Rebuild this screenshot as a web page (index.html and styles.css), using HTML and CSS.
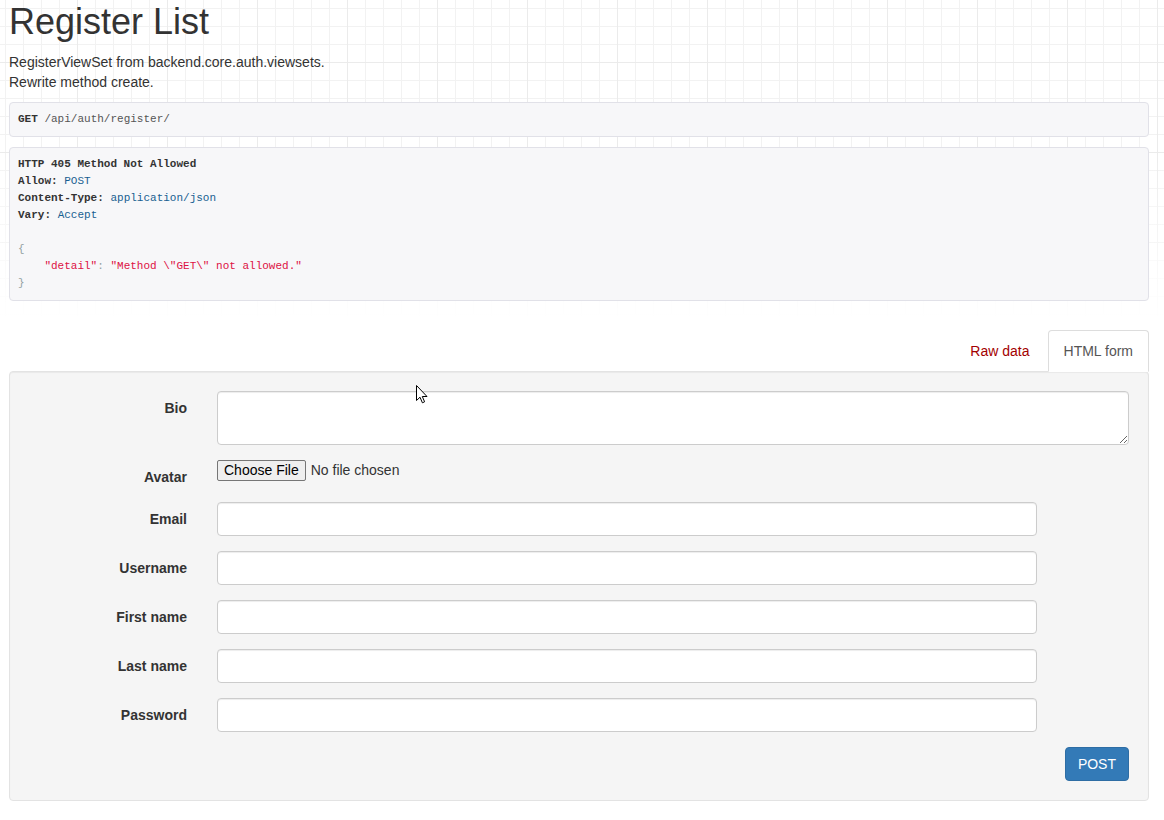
FILE: index.html
```html
<!DOCTYPE html>
<html lang="en">
<head>
<meta charset="utf-8">
<title>Register List</title>
<link rel="stylesheet" href="styles.css">
</head>
<body>
<div class="page">
  <h1 class="title">Register List</h1>
  <div class="description">
    <p>RegisterViewSet from backend.core.auth.viewsets.<br>Rewrite method create.</p>
  </div>

  <div class="request-info">
    <pre class="prettyprint"><b>GET</b> <span class="pln">/api/auth/register/</span></pre>
  </div>

  <div class="response-info">
    <pre class="prettyprint"><b>HTTP 405 Method Not Allowed</b>
<b>Allow:</b> <span class="lit">POST</span>
<b>Content-Type:</b> <span class="lit">application/json</span>
<b>Vary:</b> <span class="lit">Accept</span>

<span class="pun">{</span>
    <span class="str">"detail"</span><span class="pun">:</span> <span class="str">"Method \"GET\" not allowed."</span>
<span class="pun">}</span></pre>
  </div>

  <div class="tabbable">
    <ul class="nav-tabs">
      <li class="tab"><a class="tab-link" href="#raw">Raw data</a></li>
      <li class="tab active"><a class="tab-link" href="#form">HTML form</a></li>
    </ul>
    <div class="well">
      <form class="form-horizontal" action="#" method="post">
        <div class="form-group">
          <label class="control-label" for="bio">Bio</label>
          <div class="field"><textarea class="form-control textarea" id="bio" name="bio"></textarea></div>
        </div>
        <div class="form-group">
          <label class="control-label" for="avatar">Avatar</label>
          <div class="field"><input class="file-input" type="file" id="avatar" name="avatar"></div>
        </div>
        <div class="form-group">
          <label class="control-label" for="email">Email</label>
          <div class="field"><input class="form-control narrow" type="email" id="email" name="email"></div>
        </div>
        <div class="form-group">
          <label class="control-label" for="username">Username</label>
          <div class="field"><input class="form-control narrow" type="text" id="username" name="username"></div>
        </div>
        <div class="form-group">
          <label class="control-label" for="first_name">First name</label>
          <div class="field"><input class="form-control narrow" type="text" id="first_name" name="first_name"></div>
        </div>
        <div class="form-group">
          <label class="control-label" for="last_name">Last name</label>
          <div class="field"><input class="form-control narrow" type="text" id="last_name" name="last_name"></div>
        </div>
        <div class="form-group">
          <label class="control-label" for="password">Password</label>
          <div class="field"><input class="form-control narrow" type="password" id="password" name="password"></div>
        </div>
        <div class="form-actions">
          <button class="btn btn-primary" type="button">POST</button>
        </div>
      </form>
    </div>
  </div>

  <svg class="cursor" width="13" height="20" viewBox="0 0 13 20" aria-hidden="true">
    <path d="M0.5 0.5 L0.5 15.5 L4 12.2 L6.4 17.8 L8.6 16.8 L6.3 11.5 L11 11.5 Z" fill="#fff" stroke="#000" stroke-width="1" stroke-linejoin="miter"/>
  </svg>
</div>
</body>
</html>
```

FILE: styles.css
```css
html {
  background: #fff;
}

body {
  margin: 0;
  font-family: "Liberation Sans", Arial, Helvetica, sans-serif;
  font-size: 14px;
  line-height: 20px;
  color: #333;
  background-color: #fff;
  background-image:
    linear-gradient(to bottom, rgba(255,255,255,0) 0px, rgba(255,255,255,0) 150px, #fff 320px),
    repeating-linear-gradient(to right, #ebebeb 0 1px, transparent 1px 90px),
    repeating-linear-gradient(to bottom, #ebebeb 0 1px, transparent 1px 90px),
    repeating-linear-gradient(to right, #f2f2f2 0 1px, transparent 1px 18px),
    repeating-linear-gradient(to bottom, #f2f2f2 0 1px, transparent 1px 18px);
  background-size:
    100% 330px,
    100% 330px,
    100% 268px,
    100% 330px,
    100% 322px;
  background-position:
    0 0,
    77px 0,
    0 62px,
    5px 0,
    0 8px;
  background-repeat: no-repeat;
}

.page {
  position: relative;
  padding: 2px 15px 0 9px;
}

.title {
  margin: 0 0 10px;
  font-size: 36px;
  font-weight: 400;
  line-height: 1.1;
  color: #333;
}

.description p {
  margin: 0 0 10px;
}

.prettyprint {
  margin: 0 0 10px;
  padding: 8px;
  font-family: "Liberation Mono", "DejaVu Sans Mono", monospace;
  font-size: 11px;
  line-height: 17px;
  color: #333;
  background: #f7f7f9;
  border: 1px solid #e1e1e8;
  border-radius: 4px;
  white-space: pre;
  overflow: hidden;
}

.prettyprint b {
  font-weight: bold;
  color: #333;
}

.pln { color: #555; }
.lit { color: #195f91; }
.pun { color: #93a1a1; }
.str { color: #d14; }

.tabbable {
  margin-top: 29px;
}

.nav-tabs {
  display: flex;
  justify-content: flex-end;
  list-style: none;
  margin: 0;
  padding: 0;
}

.tab {
  margin: 0 0 -1px 2px;
}

.tab.active {
  position: relative;
  z-index: 1;
}

.tab-link {
  display: block;
  padding: 10px 15px;
  line-height: 20px;
  border: 1px solid transparent;
  border-radius: 4px 4px 0 0;
  color: #a30000;
  text-decoration: none;
}

.tab.active .tab-link {
  color: #555;
  background: #fff;
  border-color: #ddd #ddd transparent;
}

.well {
  padding: 19px;
  background: #f5f5f5;
  border: 1px solid #e3e3e3;
  border-radius: 4px;
  box-shadow: inset 0 1px 1px rgba(0,0,0,.05);
}

.form-horizontal {
  margin: 0;
}

.form-group {
  display: grid;
  grid-template-columns: 158px 1fr;
  column-gap: 30px;
  align-items: start;
  margin-bottom: 15px;
}

.control-label {
  padding-top: 7px;
  text-align: right;
  font-weight: bold;
  color: #333;
  white-space: nowrap;
}

.field {
  min-width: 0;
}

.form-control {
  display: block;
  box-sizing: border-box;
  width: 100%;
  height: 34px;
  margin: 0;
  padding: 6px 12px;
  font-family: inherit;
  font-size: 14px;
  line-height: 20px;
  color: #555;
  background: #fff;
  border: 1px solid #ccc;
  border-radius: 4px;
  box-shadow: inset 0 1px 1px rgba(0,0,0,.075);
}

.narrow {
  max-width: 820px;
}

.textarea {
  height: 54px;
  resize: vertical;
}

.file-input {
  display: block;
  margin: 0;
  padding: 0;
  font-family: inherit;
  font-size: 14px;
  line-height: 19px;
  color: #333;
}

.file-input::file-selector-button {
  font-family: inherit;
  font-size: 14px;
  line-height: 17px;
  height: 21px;
  margin: 0 5px 0 0;
  padding: 1px 6px;
  color: #000;
  background: #efefef;
  border: 1px solid #767676;
  border-radius: 2px;
}

.form-actions {
  display: flex;
  justify-content: flex-end;
}

.btn {
  display: inline-block;
  margin: 0;
  padding: 6px 12px;
  font-family: inherit;
  font-size: 14px;
  line-height: 20px;
  border: 1px solid transparent;
  border-radius: 4px;
  cursor: pointer;
}

.btn-primary {
  color: #fff;
  background: #337ab7;
  border-color: #2e6da4;
}

.cursor {
  position: absolute;
  left: 416px;
  top: 385px;
}
```
